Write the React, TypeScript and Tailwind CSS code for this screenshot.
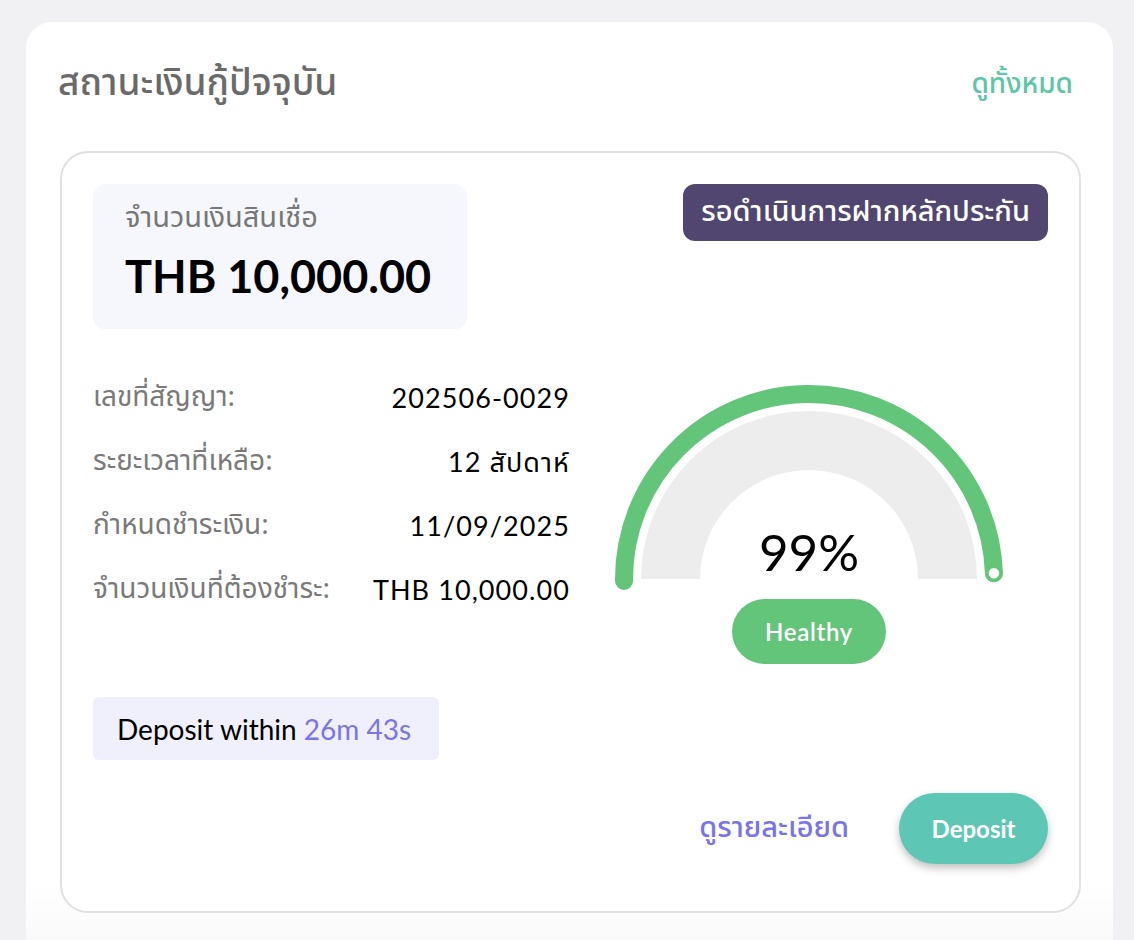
import React from "react";

const thai = { fontFamily: '"Noto Sans Thai", "Noto Sans", Lato, sans-serif' };
const latin = { fontFamily: 'Lato, "Noto Sans Thai", "Noto Sans", sans-serif' };

const rows = [
  { label: "เลขที่สัญญา:", value: "202506-0029" },
  { label: "ระยะเวลาที่เหลือ:", value: "12 สัปดาห์" },
  { label: "กำหนดชำระเงิน:", value: "11/09/2025" },
  { label: "จำนวนเงินที่ต้องชำระ:", value: "THB 10,000.00" },
];

function Gauge({ percent }: { percent: number }) {
  // center of the half circle inside the svg
  const cx = 200;
  const cy = 197;
  const r = 185;
  const angle = Math.PI - (Math.PI * percent) / 100;
  const ex = cx + r * Math.cos(angle);
  const ey = cy - r * Math.sin(angle);

  return (
    <div className="relative h-[210px] w-[400px]">
      <svg width="400" height="210" viewBox="0 0 400 210">
        {/* grey band */}
        <path
          d={`M ${cx - 168} ${cy} A 168 168 0 0 1 ${cx + 168} ${cy} L ${cx + 109} ${cy} A 109 109 0 0 0 ${cx - 109} ${cy} Z`}
          fill="#ededed"
        />
        {/* progress */}
        <path
          d={`M ${cx - r} ${cy + 2} L ${cx - r} ${cy} A ${r} ${r} 0 0 1 ${ex} ${ey}`}
          fill="none"
          stroke="#63c57a"
          strokeWidth="18"
          strokeLinecap="round"
        />
        <circle cx={ex} cy={ey} r="7" fill="#ffffff" stroke="#63c57a" strokeWidth="3.5" />
      </svg>
      <div
        className="absolute left-0 right-0 top-[140px] text-center text-[51px] leading-[60px] text-black"
        style={latin}
      >
        {percent}%
      </div>
    </div>
  );
}

export default function App() {
  return (
    <div className="h-[940px] w-full overflow-hidden bg-[#f1f1f4] pl-[26px] pr-[21px] pt-[22px]">
      <div className="h-[960px] rounded-t-[26px] bg-gradient-to-b from-white from-[90%] to-[#f5f5f5] pl-[34px] pr-[32px]">
        {/* Header */}
        <div className="flex h-[129px] items-center justify-between pb-[4px] pr-[8px]">
          <h2 className="-ml-[2px] text-[37px] font-medium text-[#6a6a6a]" style={thai}>
            สถานะเงินกู้ปัจจุบัน
          </h2>
          <a className="text-[28px] font-medium text-[#5cc6a8]" style={thai}>
            ดูทั้งหมด
          </a>
        </div>

        {/* Loan card */}
        <div className="rounded-[28px] border-2 border-[#e0e0e0] bg-white px-[31px] pb-[47px] pt-[31px]">
          <div className="flex items-start justify-between">
            <div className="flex h-[145px] w-[374px] flex-col rounded-[12px] bg-[#f6f7fc] px-[32px] pt-[14px]">
              <span className="text-[29px] leading-[40px] text-[#777777]" style={thai}>
                จำนวนเงินสินเชื่อ
              </span>
              <span className="mt-[8px] text-[45px] font-bold leading-[60px] text-black" style={latin}>
                THB 10,000.00
              </span>
            </div>
            <div
              className="flex h-[57px] items-center rounded-[12px] bg-[#51466f] px-[18px] text-[29px] font-medium text-white"
              style={thai}
            >
              รอดำเนินการฝากหลักประกัน
            </div>
          </div>

          {/* Details + gauge */}
          <div className="mt-[37px] flex items-start">
            <div className="flex w-[477px] flex-col">
              {rows.map((row) => (
                <div key={row.label} className="flex h-[64px] items-center justify-between">
                  <span className="text-[28px] text-[#7a7a7a]" style={thai}>
                    {row.label}
                  </span>
                  <span className="text-[27px] tracking-[0.04em] text-black" style={latin}>
                    {row.value}
                  </span>
                </div>
              ))}
            </div>
            <div className="flex flex-1 flex-col items-center pt-[16px]">
              <Gauge percent={99} />
              <div
                className="mt-[7px] flex h-[65px] w-[154px] items-center justify-center rounded-full bg-[#63c57a] text-[24px] font-semibold tracking-[0.03em] text-white"
                style={latin}
              >
                Healthy
              </div>
            </div>
          </div>

          {/* Countdown */}
          <div
            className="mt-[33px] flex h-[63px] w-[346px] items-center rounded-[6px] bg-[#f0f0fc] px-[24px] text-[28px] text-black"
            style={latin}
          >
            Deposit within&nbsp;<span className="text-[#7a73ee]">26m 43s</span>
          </div>

          {/* Actions */}
          <div className="mt-[33px] flex items-center justify-end gap-[50px]">
            <a className="text-[29px] font-medium text-[#7b73ee]" style={thai}>
              ดูรายละเอียด
            </a>
            <button
              className="flex h-[71px] w-[149px] items-center justify-center rounded-full bg-[#5dc6b4] text-[24px] font-bold text-white shadow-[0_4px_8px_rgba(0,0,0,0.25)]"
              style={latin}
            >
              Deposit
            </button>
          </div>
        </div>
      </div>
    </div>
  );
}
